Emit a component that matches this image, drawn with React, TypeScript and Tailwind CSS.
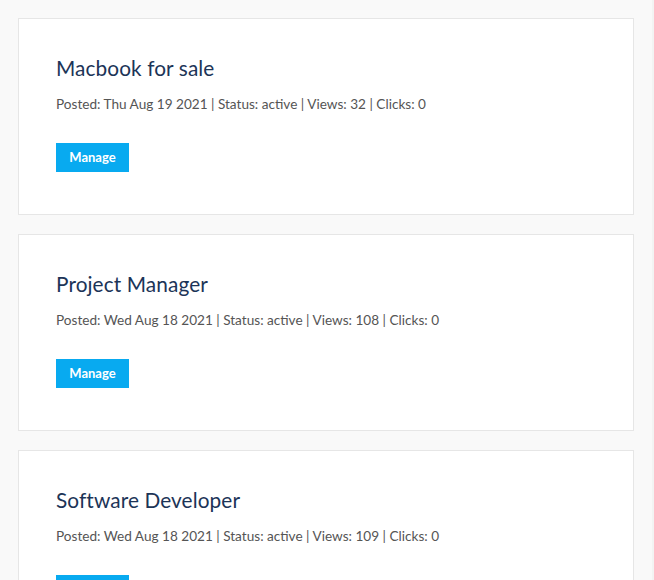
import React from "react";

const items = [
  { title: "Macbook for sale", date: "Thu Aug 19 2021", views: 32 },
  { title: "Project Manager", date: "Wed Aug 18 2021", views: 108 },
  { title: "Software Developer", date: "Wed Aug 18 2021", views: 109 },
];

export default function App() {
  return (
    <div
      className="h-[580px] overflow-hidden bg-[#f9f9f9] pt-[18px] pl-[18px] pr-[18px] flex flex-col gap-[19px] border-r-2 border-[#f3f3f3]"
      style={{ fontFamily: "Lato, 'Open Sans', sans-serif" }}
    >
      {items.map((it) => (
        <div
          key={it.title}
          className="bg-white border border-[#e6e6e6] h-[197px] pl-[37px] pt-[36px] shrink-0"
        >
          <h2 className="text-[20.8px] leading-[26px] text-[#1c3457] tracking-[0.1px]">
            {it.title}
          </h2>
          <p className="mt-[14px] text-[13.6px] leading-[18px] text-[#555]">
            Posted: {it.date} | Status: active | Views: {it.views} | Clicks: 0
          </p>
          <button className="mt-[30px] w-[73px] h-[29px] bg-[#08aaf0] text-white text-[13px] font-bold">
            Manage
          </button>
        </div>
      ))}
    </div>
  );
}
